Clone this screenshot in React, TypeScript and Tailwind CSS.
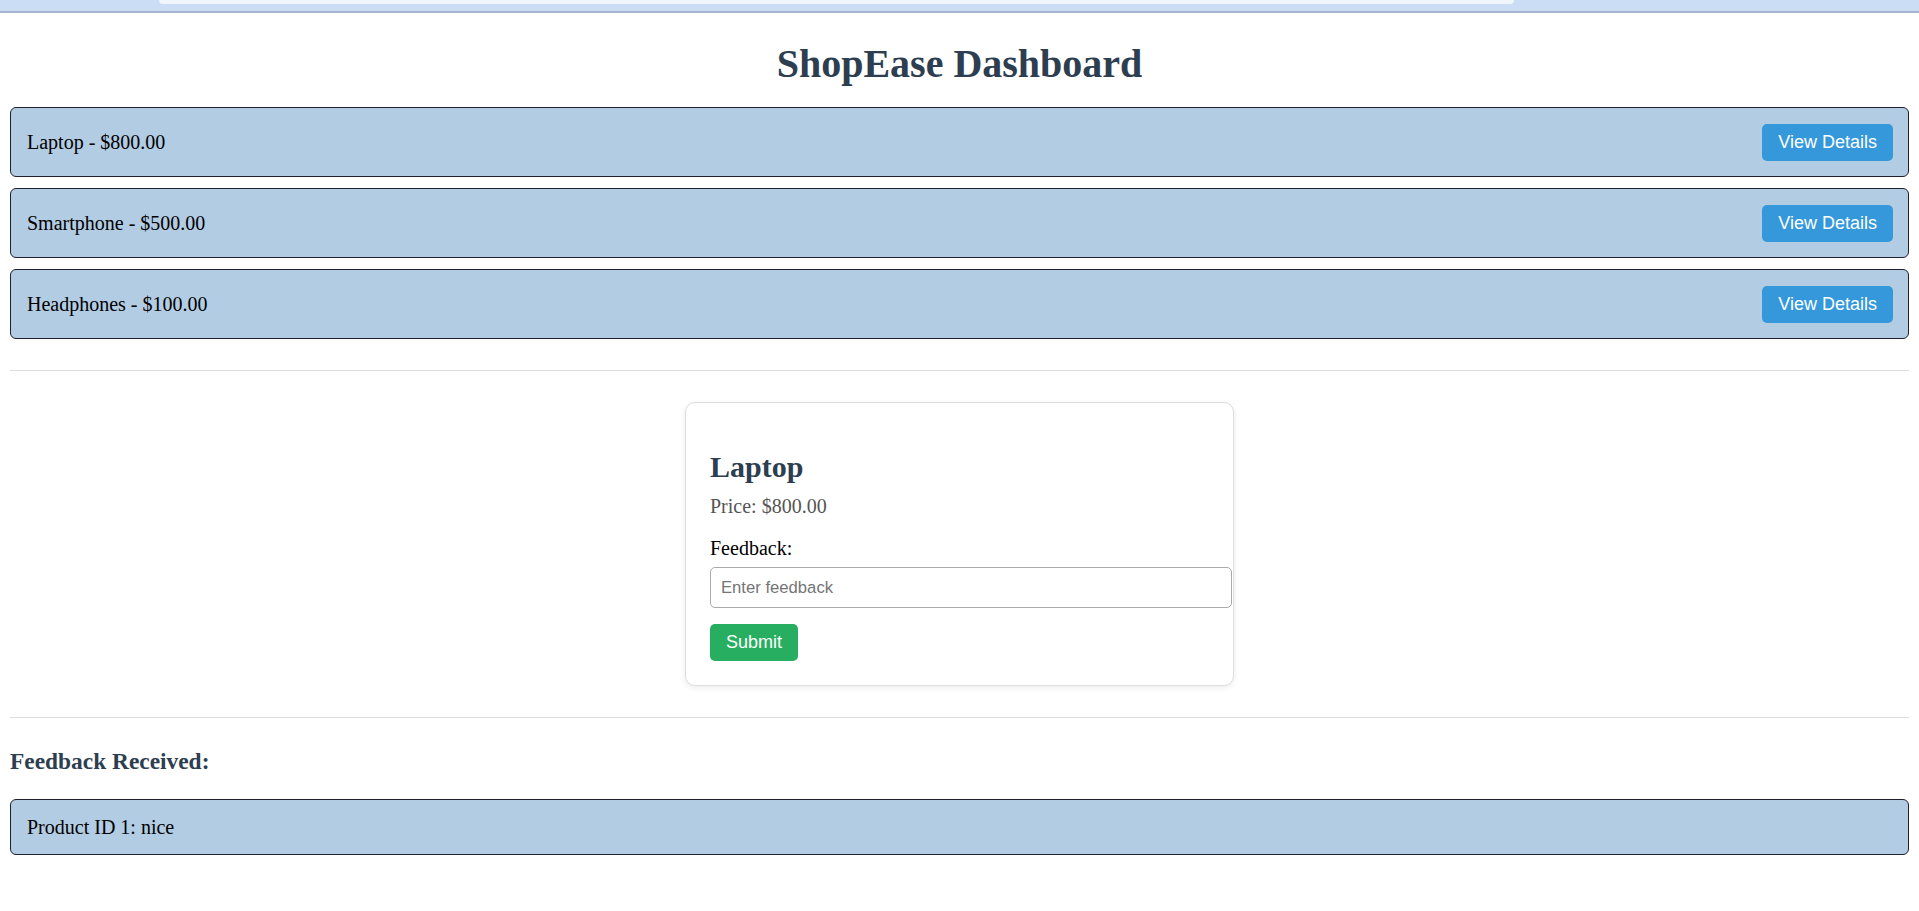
const products = [
  { id: 1, name: "Laptop", price: 800 },
  { id: 2, name: "Smartphone", price: 500 },
  { id: 3, name: "Headphones", price: 100 },
];

const feedback = [{ productId: 1, text: "nice" }];

export default function App() {
  const selected = products[0];

  return (
    <div className="min-h-screen bg-white font-['Liberation_Serif',serif] text-black">
      {/* browser strip at the top of the shot */}
      <div className="h-[13px] bg-[#cbdcf5] border-b-2 border-[#a5b5d0]">
        <div className="ml-[159px] w-[1355px] h-[4px] bg-[#f1f6fd] rounded-b-[8px]" />
      </div>

      <div className="px-[10px] pb-[20px]">
        <h1 className="mt-[28px] text-center text-[40px] leading-[46px] font-bold text-[#2c3e50]">
          ShopEase Dashboard
        </h1>

        <div className="mt-[20px] flex flex-col gap-[11px]">
          {products.map((p) => (
            <div
              key={p.id}
              className="h-[70px] flex items-center justify-between pl-[16px] pr-[15px] bg-[#b2cce4] border border-[#1f1f2e] rounded-[6px]"
            >
              <span className="text-[20px] leading-[23px]">
                {p.name} - ${p.price.toFixed(2)}
              </span>
              <button className="h-[37px] px-[16px] rounded-[5px] bg-[#3498db] text-white text-[18px] leading-[21px] font-['Liberation_Sans',Arial,sans-serif]">
                View Details
              </button>
            </div>
          ))}
        </div>

        <hr className="mt-[31px] border-0 border-t border-[#dddddd]" />

        {/* Details card */}
        <div className="mx-auto mt-[31px] w-[549px] bg-white border border-[#dddddd] rounded-[10px] shadow-[0_2px_6px_rgba(0,0,0,0.08)] px-[24px] pt-[25px] pb-[24px]">
          <h2 className="mt-[21px] text-[30px] leading-[35px] font-bold text-[#2c3e50]">{selected.name}</h2>
          <p className="mt-[11px] text-[20px] leading-[23px] text-[#555555]">
            Price: ${selected.price.toFixed(2)}
          </p>
          <label className="block mt-[19px] text-[20px] leading-[23px]">Feedback:</label>
          <input
            type="text"
            placeholder="Enter feedback"
            className="block mt-[7px] h-[41px] w-[522px] border border-[#aaaaaa] rounded-[5px] px-[10px] text-[16.67px] font-['Liberation_Sans',Arial,sans-serif] placeholder:text-[#757575] outline-none"
          />
          <button className="block mt-[16px] h-[37px] w-[88px] rounded-[5px] bg-[#27ae60] text-white text-[18px] leading-[21px] font-['Liberation_Sans',Arial,sans-serif]">
            Submit
          </button>
        </div>

        <hr className="mt-[31px] border-0 border-t border-[#dddddd]" />

        <h3 className="mt-[30px] text-[23.4px] leading-[27px] font-bold text-[#2c3e50]">Feedback Received:</h3>
        <div className="mt-[24px] flex flex-col gap-[11px]">
          {feedback.map((f, i) => (
            <div
              key={i}
              className="h-[56px] flex items-center pl-[16px] pr-[15px] bg-[#b2cce4] border border-[#1f1f2e] rounded-[6px]"
            >
              <span className="text-[20px] leading-[23px]">
                Product ID {f.productId}: {f.text}
              </span>
            </div>
          ))}
        </div>
      </div>
    </div>
  );
}
